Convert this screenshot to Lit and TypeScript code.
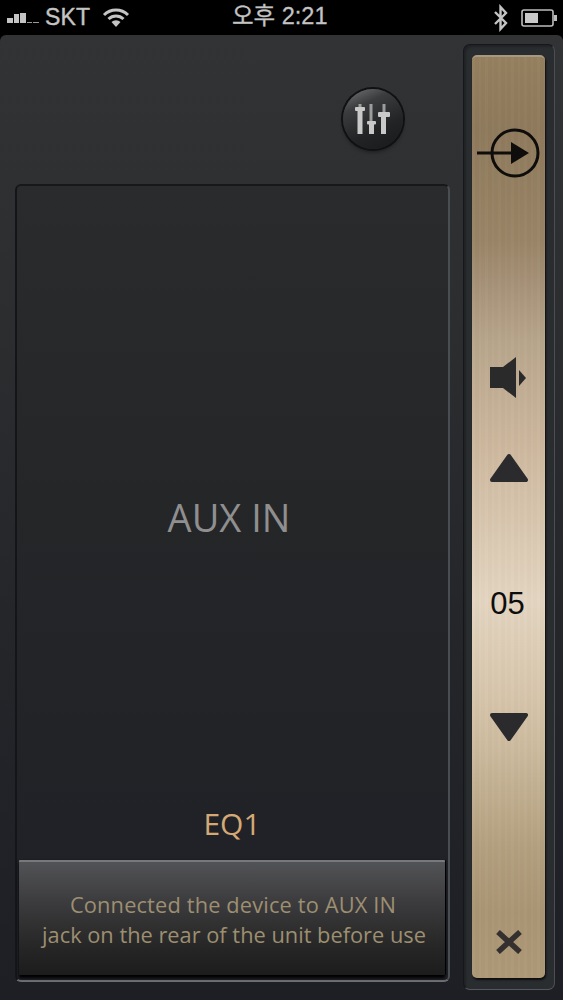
import { LitElement, html, css } from "lit";
import { customElement } from "lit/decorators.js";

@customElement("app-root")
export class AppRoot extends LitElement {
  static styles = css`
    :host { display: block; width: 563px; height: 1000px; background: #000; overflow: hidden; font-family: "Liberation Sans", Arial, sans-serif; }
    .status { height: 35px; background: #000; color: #c4c4c4; display: flex; align-items: center; position: relative; font-size: 23px; }
    .signal { margin-left: 7px; display: flex; align-items: flex-end; gap: 1px; height: 10px; margin-top: 1px; }
    .signal i { display: block; width: 5.6px; background: #c4c4c4; }
    .signal i.off { height: 1.5px; width: 5.6px; background: #999; }
    .carrier { margin-left: 6px; font-weight: 400; letter-spacing: 0.2px; -webkit-text-stroke: 0.4px #c4c4c4; }
    .wifi { margin-left: 12px; margin-top: -2px; }
    .time { position: absolute; left: 232px; top: 3px; font-family: "Liberation Sans", "Noto Sans CJK KR", sans-serif; font-size: 23.5px; line-height: 27px; white-space: nowrap; -webkit-text-stroke: 0.3px #c4c4c4; }
    .status-right { margin-left: auto; display: flex; align-items: center; gap: 12px; margin-right: 5px; }
    .main { height: 965px; box-sizing: border-box; border-radius: 6px 6px 0 0; background: linear-gradient(180deg, #313335 0%, #2b2d2f 30%, #24262a 60%, #1d1f25 100%); display: flex; padding: 9px 8px 10px 15px; }
    .left { width: 435px; display: flex; flex-direction: column; }
    .top { height: 140px; flex: none; display: flex; justify-content: flex-end; padding: 45px 47px 0 0; box-sizing: border-box; }
    .eqbtn { width: 60px; height: 60px; box-sizing: border-box; border-radius: 50%; background: linear-gradient(155deg, #77797b 0%, #3b3c3e 28%, #222324 65%, #18191a 100%); box-shadow: 0 0 0 2px #101113, 0 3px 4px rgba(0,0,0,.45); display: flex; align-items: center; justify-content: center; }
    .panel { height: 798px; box-sizing: border-box; border-radius: 6px; background: linear-gradient(180deg, #2a2b2c 0%, #252628 40%, #1f2026 100%); border-top: 2px solid #17181a; border-left: 2px solid #141518; border-right: 2px solid #4a4d51; border-bottom: 2px solid #6b6e72; display: flex; flex-direction: column; align-items: center; padding: 2px 3px 5px 2px; }
    .aux { margin-top: 304px; height: 50px; line-height: 50px; font-family: "Open Sans", sans-serif; font-size: 38px; color: #8f8f90; margin-right: 6px; }
    .eq { margin-top: 264px; height: 36px; line-height: 36px; font-family: "Open Sans", sans-serif; font-size: 30px; color: #d5a975; }
    .notice { margin-top: auto; width: 100%; height: 115px; flex: none; box-sizing: border-box; padding: 28px 0 0 4px; border-top: 2px solid #77797b; background: linear-gradient(180deg, #525356 0%, #3c3c3e 35%, #262626 75%, #1c1c1d 100%); box-shadow: 0 3px 3px #000, 1px 0 1px #000; border-radius: 1px; text-align: center; font-family: "Open Sans", sans-serif; font-size: 21.8px; line-height: 30px; color: #9d8f71; white-space: nowrap; }
    .l1 { letter-spacing: 0.15px; margin-left: -2px; }
    .rail { margin-left: 13px; width: 92px; height: 946px; box-sizing: border-box; flex: none; border-radius: 7px; background: #2a2d30; border: 1px solid #15171a; border-right-color: #4b4e52; border-bottom-color: #55585c; box-shadow: inset 2px 2px 2px rgba(0,0,0,.25); padding: 10px 9px 11px 8px; }
    .bronze { height: 923px; width: 73px; box-sizing: border-box; border-radius: 5px;
      background:
        repeating-linear-gradient(90deg, rgba(255,255,255,.015) 0 3px, rgba(0,0,0,.015) 3px 7px, rgba(255,255,255,.01) 7px 9px, rgba(0,0,0,.01) 9px 13px),
        linear-gradient(180deg, #95805f 0%, #8f7a5c 8%, #9a8567 20%, #a8937a 25%, #b8a68c 31%, #cdb89e 42%, #e4d5c1 59%, #d9c8af 68%, #cdbb9f 75%, #b3a07f 86%, #aa9574 93%, #ae9978 100%);
      border-top: 2px solid #a8987f; box-shadow: 1px 2px 2px #0c0d0e; display: flex; flex-direction: column; align-items: center; }
    .bronze svg { display: block; flex: none; }
    .inp { margin-top: 71px; margin-left: -2px; }
    .spk { margin-top: 179px; margin-left: -2px; }
    .up { margin-top: 54px; }
    .vol { margin-top: 99px; height: 44px; line-height: 44px; font-size: 31px; color: #0d0d0d; margin-left: -2px; }
    .down { margin-top: 86px; }
    .close { margin-top: 188px; }
  `;

  render() {
    return html`
      <div class="status">
        <div class="signal">
          <i style="height:5px"></i><i style="height:9px"></i><i style="height:10px"></i><i class="off"></i><i class="off"></i>
        </div>
        <span class="carrier">SKT</span>
        <svg class="wifi" width="28" height="20" viewBox="0 0 28 20">
          <path d="M2 8 A17 17 0 0 1 26 8" fill="none" stroke="#c4c4c4" stroke-width="3"/>
          <path d="M6.5 12 A11 11 0 0 1 21.5 12" fill="none" stroke="#c4c4c4" stroke-width="3"/>
          <path d="M14 20 L9.5 15 A6.5 6.5 0 0 1 18.5 15 Z" fill="#c4c4c4"/>
        </svg>
        <span class="time">오후 2:21</span>
        <div class="status-right">
          <svg width="16" height="28" viewBox="0 0 16 28">
            <path d="M2 8 L13 19 L7.5 25 L7.5 3 L13 9 L2 20" fill="none" stroke="#c4c4c4" stroke-width="2.4"/>
          </svg>
          <svg width="37" height="18" viewBox="0 0 37 18">
            <rect x="1" y="1" width="31" height="16" rx="2" fill="none" stroke="#bdbdbd" stroke-width="1.6"/>
            <rect x="4" y="4" width="13" height="10" fill="#c9c9c9"/>
            <rect x="33" y="6" width="3" height="6" fill="#bdbdbd"/>
          </svg>
        </div>
      </div>
      <div class="main">
        <div class="left">
          <div class="top">
            <div class="eqbtn">
              <svg width="36" height="30" viewBox="0 0 36 30">
                <g fill="#c9c9c9">
                  <rect x="3.5" y="0" width="3" height="4" opacity=".7"/><rect x="2.5" y="7" width="5" height="23"/><rect x="0" y="3" width="10" height="4" rx="1"/>
                  <rect x="14.5" y="0" width="3" height="17" opacity=".7"/><rect x="14" y="20" width="5" height="10"/><rect x="12" y="17" width="9" height="3.5" rx="1"/>
                  <rect x="27.5" y="0" width="3" height="8" opacity=".7"/><rect x="26" y="13" width="5" height="17"/><rect x="23" y="8" width="12" height="5" rx="1"/>
                </g>
              </svg>
            </div>
          </div>
          <div class="panel">
            <div class="aux">AUX IN</div>
            <div class="eq">EQ1</div>
            <div class="notice"><span class="l1">Connected the device to AUX IN</span><br>jack on the rear of the unit before use</div>
          </div>
        </div>
        <div class="rail">
          <div class="bronze">
            <svg class="inp" width="64" height="50" viewBox="0 0 64 50">
              <circle cx="39" cy="25" r="23" fill="none" stroke="#0e0d0c" stroke-width="3"/>
              <rect x="1" y="23.5" width="38" height="3" fill="#0e0d0c"/>
              <path d="M35 14 L53 25 L35 36 Z" fill="#0e0d0c"/>
            </svg>
            <svg class="spk" width="38" height="42" viewBox="0 0 38 42">
              <path d="M1 10 H14 L27 0 V41 L14 31 H1 Z" fill="#2b2a2b"/>
              <path d="M30 13 L37 21 L30 29 Z" fill="#2b2a2b"/>
            </svg>
            <svg class="up" width="40" height="30" viewBox="0 0 40 30">
              <path d="M20 3 L37 27 H3 Z" fill="#2b2a2d" stroke="#2b2a2d" stroke-width="4" stroke-linejoin="round"/>
            </svg>
            <div class="vol">05</div>
            <svg class="down" width="40" height="30" viewBox="0 0 40 30">
              <path d="M20 27 L37 3 H3 Z" fill="#2b2a2d" stroke="#2b2a2d" stroke-width="4" stroke-linejoin="round"/>
            </svg>
            <svg class="close" width="28" height="24" viewBox="0 0 28 24">
              <path d="M3 2 L25 22 M25 2 L3 22" fill="none" stroke="#33302f" stroke-width="5.5"/>
            </svg>
          </div>
        </div>
      </div>
    `;
  }
}
